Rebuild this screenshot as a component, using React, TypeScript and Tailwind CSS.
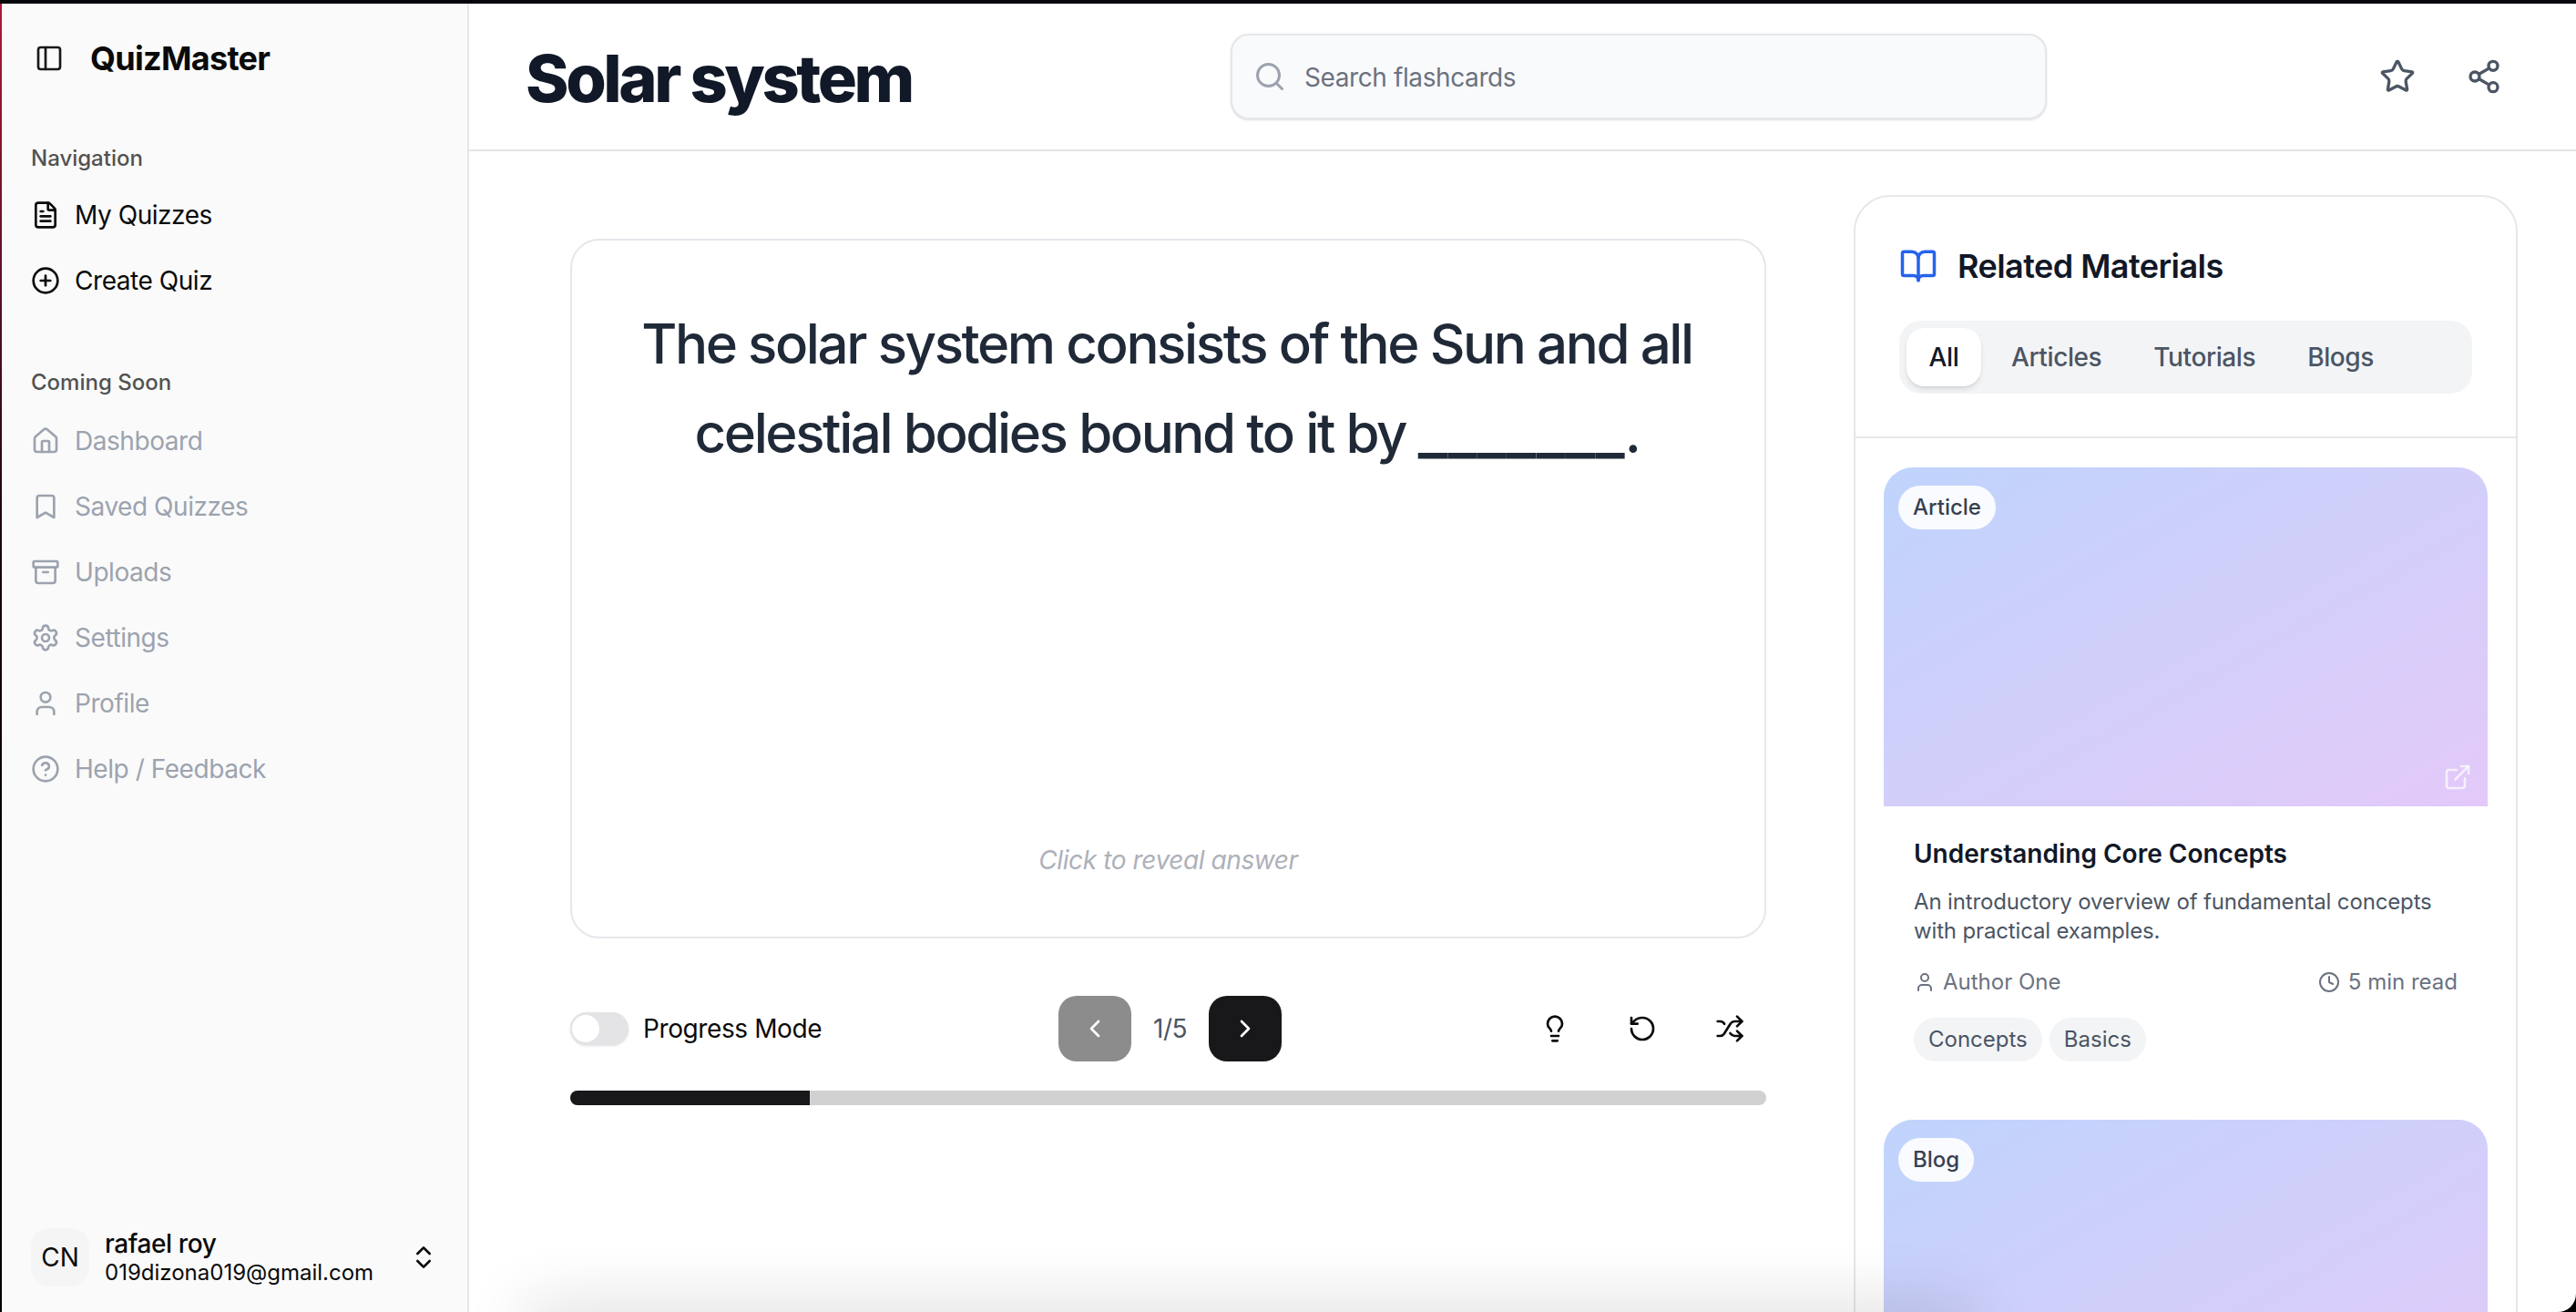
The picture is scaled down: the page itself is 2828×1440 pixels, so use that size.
import React from 'react';
import {
  Archive,
  Bookmark,
  BookOpen,
  ChevronLeft,
  ChevronRight,
  ChevronsUpDown,
  CircleHelp,
  CirclePlus,
  Clock,
  ExternalLink,
  FileText,
  House,
  Lightbulb,
  PanelLeft,
  RotateCcw,
  Search,
  Settings,
  Share2,
  Shuffle,
  Star,
  User,
} from 'lucide-react';

const NAV_ITEMS = [
  { label: 'My Quizzes', icon: FileText },
  { label: 'Create Quiz', icon: CirclePlus },
];

const SOON_ITEMS = [
  { label: 'Dashboard', icon: House },
  { label: 'Saved Quizzes', icon: Bookmark },
  { label: 'Uploads', icon: Archive },
  { label: 'Settings', icon: Settings },
  { label: 'Profile', icon: User },
  { label: 'Help / Feedback', icon: CircleHelp },
];

function Sidebar() {
  return (
    <aside className="flex h-full w-[511px] shrink-0 flex-col border-r-2 border-[#e5e5e5] bg-[#fafafa] box-content">
      <div className="flex h-[120px] shrink-0 items-center pl-[36px]">
        <PanelLeft size={32} strokeWidth={2} className="text-[#18181b]" />
        <span className="ml-[29px] text-[36px] font-bold leading-none tracking-[-0.7px] text-[#0a0a0a]">QuizMaster</span>
      </div>

      <div className="mt-[26px] flex h-[48px] items-center pl-[32px] text-[24px] font-medium text-[#525252]">Navigation</div>
      <nav className="mt-[2px] flex flex-col">
        {NAV_ITEMS.map(({ label, icon: Icon }) => (
          <div key={label} className="flex h-[72px] items-center gap-[16px] pl-[32px] text-[28px] tracking-[-0.45px] text-[#0a0a0a]">
            <Icon size={32} />
            <span>{label}</span>
          </div>
        ))}
      </nav>

      <div className="mt-[52px] flex h-[48px] items-center pl-[32px] text-[24px] font-medium text-[#525252]">Coming Soon</div>
      <nav className="mt-[4px] flex flex-col">
        {SOON_ITEMS.map(({ label, icon: Icon }) => (
          <div key={label} className="flex h-[72px] items-center gap-[16px] pl-[32px] text-[28px] tracking-[-0.45px] text-[#9ca3af]">
            <Icon size={32} />
            <span>{label}</span>
          </div>
        ))}
      </nav>

      <div className="mt-auto mb-[28px] flex items-center pl-[32px]">
        <div className="flex h-[64px] w-[64px] items-center justify-center rounded-[20px] bg-[#f5f5f5] text-[28px] text-[#0a0a0a]">CN</div>
        <div className="ml-[17px] flex w-[334px] flex-col">
          <span className="text-[28px] font-medium leading-[34px] tracking-[-0.4px] text-[#0a0a0a]">rafael roy</span>
          <span className="text-[24px] leading-[30px] text-[#0a0a0a]">019dizona019@gmail.com</span>
        </div>
        <ChevronsUpDown size={32} className="text-[#0a0a0a]" />
      </div>
    </aside>
  );
}

function Header() {
  return (
    <header className="flex h-[160px] box-content shrink-0 items-center border-b-2 border-[#e5e5e5] bg-white pl-[62px]">
      <h1 className="w-[774px] pt-[3px] text-[72px] font-[780] leading-none tracking-[-3.4px] text-[#111827]">Solar system</h1>
      <div className="flex h-[94px] w-[896px] items-center rounded-[20px] border-2 border-[#e5e7eb] bg-[#f9fafb] pl-[23px] shadow-sm">
        <Search size={36} className="text-[#9ca3af]" />
        <span className="ml-[20px] pt-[2px] text-[28px] tracking-[-0.4px] text-[#6b7280]">Search flashcards</span>
      </div>
      <div className="ml-[365px] flex items-center gap-[55px] text-[#4b5563]">
        <Star size={40} />
        <Share2 size={40} />
      </div>
    </header>
  );
}

function Flashcard() {
  return (
    <div className="flex h-[768px] w-[1313px] flex-col items-center justify-between rounded-[32px] border-2 border-[#e5e7eb] bg-white px-[64px] pt-[64px] pb-[64px]">
      <p className="pr-[3px] text-center text-[60px] font-medium leading-[98px] tracking-[-2.4px] text-[#1f2937]">
        The solar system consists of the Sun and all celestial bodies bound to it by{' '}
        <span className="text-[70px] leading-none tracking-normal">_______</span>.
      </p>
      <span className="text-[28px] italic leading-[40px] tracking-[-0.4px] text-[#adb1b9]">Click to reveal answer</span>
    </div>
  );
}

function Controls() {
  return (
    <div className="mt-[63px] flex h-[72px] w-[1313px] items-center justify-between">
      <div className="flex items-center gap-[16px]">
        <div className="flex h-[36px] w-[64px] items-center rounded-full bg-[#e4e4e7] shadow-sm">
          <div className="h-[34px] w-[34px] rounded-full border-2 border-[#e4e4e7] bg-white" />
        </div>
        <span className="text-[28px] tracking-[-0.4px] text-[#0a0a0a]">Progress Mode</span>
      </div>
      <div className="flex items-center gap-[24px]">
        <button className="flex h-[72px] w-[80px] items-center justify-center rounded-[20px] bg-[#8c8c8d] text-white">
          <ChevronLeft size={32} />
        </button>
        <span className="text-[28px] tracking-[-0.4px] text-[#4b5563]">1/5</span>
        <button className="flex h-[72px] w-[80px] items-center justify-center rounded-[20px] bg-[#18181b] text-white">
          <ChevronRight size={32} />
        </button>
      </div>
      <div className="flex items-center gap-[16px] text-[#0a0a0a]">
        <button className="flex h-[72px] w-[80px] items-center justify-center"><Lightbulb size={32} /></button>
        <button className="flex h-[72px] w-[80px] items-center justify-center"><RotateCcw size={32} /></button>
        <button className="flex h-[72px] w-[80px] items-center justify-center"><Shuffle size={32} /></button>
      </div>
    </div>
  );
}

function Tabs() {
  return (
    <div className="flex h-[80px] w-[629px] items-center gap-[9px] rounded-[24px] bg-[#f3f4f6] px-[8px]">
      <div className="flex h-[64px] w-[82px] items-center justify-center rounded-[20px] bg-white text-[28px] font-medium tracking-[-0.4px] text-[#111827] shadow-md">All</div>
      {['Articles', 'Tutorials', 'Blogs'].map((tab) => (
        <div key={tab} className="flex h-[64px] items-center px-[24px] text-[28px] font-medium tracking-[-0.4px] text-[#4b5563]">{tab}</div>
      ))}
    </div>
  );
}

function MaterialCard({ kind }: { kind: string }) {
  return (
    <div className="relative h-[372px] w-[663px] shrink-0 rounded-t-[32px] bg-gradient-to-br from-[#bfd4fc] to-[#e3c9f9]">
      <span className="absolute top-[20px] left-[16px] flex h-[48px] items-center rounded-full bg-white/90 px-[16px] text-[24px] font-medium text-[#374151]">{kind}</span>
      <ExternalLink size={32} className="absolute right-[17px] bottom-[16px] text-white/70" />
    </div>
  );
}

function RelatedPanel() {
  return (
    <section className="w-[729px] rounded-[40px] border-2 border-[#e5e7eb] bg-white">
      <div className="h-[265px] border-b-2 border-[#e5e7eb] px-[48px] pt-[56px]">
        <div className="flex h-[40px] items-center gap-[22px]">
          <BookOpen size={42} className="text-[#2563eb]" />
          <h2 className="text-[36px] font-semibold leading-none tracking-[-0.55px] text-[#111827]">Related Materials</h2>
        </div>
        <div className="mt-[40px]"><Tabs /></div>
      </div>
      <div className="flex flex-col px-[31px] pt-[32px]">
        <MaterialCard kind="Article" />
        <div className="px-[33px] pt-[32px] pb-[64px]">
          <h3 className="text-[28px] font-semibold leading-[40px] text-[#111827]">Understanding Core Concepts</h3>
          <p className="mt-[17px] text-[24px] leading-[32px] tracking-[-0.15px] text-[#4b5563]">
            An introductory overview of fundamental concepts with practical examples.
          </p>
          <div className="mt-[24px] flex items-center justify-between text-[24px] leading-[32px] text-[#6b7280]">
            <span className="flex items-center gap-[8px]"><User size={24} />Author One</span>
            <span className="flex items-center gap-[9px]"><Clock size={24} />5 min read</span>
          </div>
          <div className="mt-[23px] flex gap-[8px]">
            {['Concepts', 'Basics'].map((tag) => (
              <span key={tag} className="flex h-[48px] items-center rounded-full bg-[#f3f4f6] px-[16px] text-[24px] text-[#4b5563]">{tag}</span>
            ))}
          </div>
        </div>
        <MaterialCard kind="Blog" />
      </div>
    </section>
  );
}

export default function App() {
  return (
    <div className="flex h-[1440px] w-[2828px] flex-col overflow-hidden bg-black font-['Inter',sans-serif]">
      <div className="h-[4px] shrink-0 bg-[#05060a]" />
      <div className="flex min-h-0 flex-1">
        <div className="w-[2px] shrink-0 bg-gradient-to-b from-[#b0183c] via-[#1c0510] via-40% to-black" />
        <div className="relative flex min-w-0 flex-1 overflow-hidden rounded-br-[20px] bg-white">
          <Sidebar />
          <main className="flex min-w-0 flex-1 flex-col">
            <Header />
            <div className="flex min-h-0 flex-1 items-start">
              <div className="w-[1520px] shrink-0 pt-[96px] pl-[111px]">
                <Flashcard />
                <Controls />
                <div className="mt-[32px] h-[16px] w-[1313px] overflow-hidden rounded-full bg-[#d1d1d1]">
                  <div className="h-full w-[20%] bg-[#18181b]" />
                </div>
              </div>
              <div className="pt-[48px]"><RelatedPanel /></div>
            </div>
          </main>
          {/* soft shadow of something floating just below the window */}
          <div className="absolute top-[1436px] left-[580px] h-[40px] w-[1580px] rounded-[20px] shadow-[0_0_70px_10px_rgba(0,0,0,0.13)]" />
        </div>
      </div>
    </div>
  );
}
